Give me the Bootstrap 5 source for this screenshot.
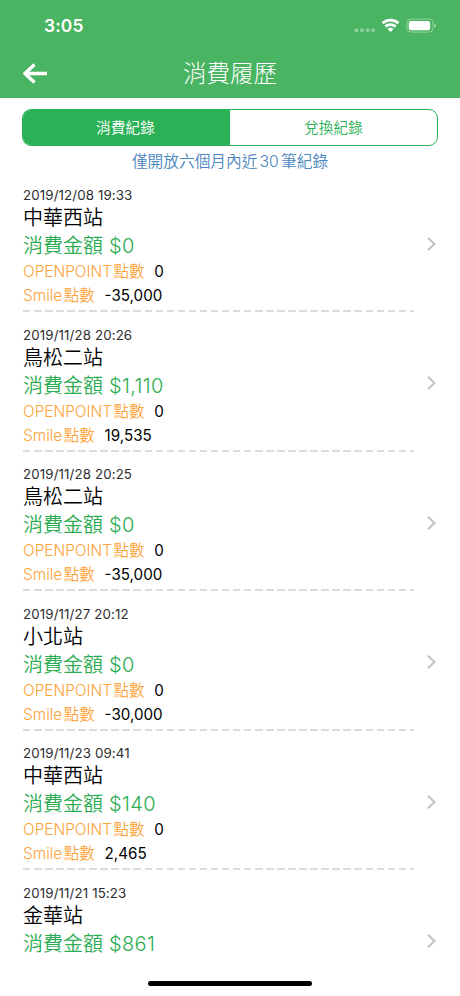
<!DOCTYPE html>
<html lang="zh-Hant">
<head>
<meta charset="utf-8">
<meta name="viewport" content="width=device-width, initial-scale=1">
<title>消費履歷</title>
<link href="https://cdn.jsdelivr.net/npm/bootstrap@5.3.0/dist/css/bootstrap.min.css" rel="stylesheet">
<style>
body{font-family:Inter,"Noto Sans CJK TC",sans-serif;font-weight:400;color:#000;height:996px;overflow:hidden}
.topbar{height:98px;background:#49b461;flex:none}
.status{height:50px;padding:2px 24px 0 44px}
.clock{font-size:17.4px;font-weight:600;letter-spacing:.1px}
.titlebar{height:48px;padding:0 23px}
.page-title{font-size:23.5px;font-weight:300;line-height:48px}
.side{width:40px}
.seg{height:37px;margin:11px 22px 0;border:1px solid #2bb256;border-radius:9px;overflow:hidden;flex:none}
.seg .btn{font-size:14.7px;color:#2bb256;border:0;border-radius:0;padding:2px 0 0;font-weight:350}
.seg .btn.active{background:#2bb256;color:#fff;padding-right:2px}
.notice{font-size:15.7px;line-height:24px;height:24px;margin-top:4px;color:#4a86bd;font-weight:350;flex:none;word-spacing:-2.2px}
.records{margin-top:12px;padding-left:23px}
.record{height:139.6px;flex:none}
.info{width:391px;flex:none}
.when{font-size:13.3px;line-height:18px;height:18px;color:#2d2d2d;letter-spacing:.12px}
.station{font-size:20px;line-height:28px;height:27px;font-weight:350}
.amount{font-size:20px;line-height:30px;height:30px;color:#2bab52;font-weight:350}
.amount span{letter-spacing:.35px;margin-left:.4px}
.points{font-size:15.2px;line-height:22px;height:23px}
.points + .points{height:24px;line-height:24px}
.points .tag{color:#fba338;font-weight:350;margin-right:10px;font-size:15.4px;word-spacing:-2.8px}
.rule{height:2px;margin-top:2px;background:repeating-linear-gradient(90deg,#dcdcdc 0 7.5px,transparent 7.5px 11.05px)}
.go{margin:50.500px 0 0 13px}
.home{width:164px;height:5px;left:148px;top:981px;background:#000}
</style>
</head>
<body class="bg-white d-flex flex-column position-relative">
<header class="topbar text-white">
  <div class="status d-flex align-items-center justify-content-between">
    <span class="clock">3:05</span>
    <svg width="82" height="16" viewBox="0 0 82 16" fill="#fff">
      <g opacity=".38"><circle cx="2.4" cy="12.3" r="2"/><circle cx="8" cy="12.3" r="2"/><circle cx="13.6" cy="12.3" r="2"/><circle cx="19.2" cy="12.3" r="2"/></g>
      <g transform="translate(-.5 -1)"><g fill="none" stroke="#fff" stroke-width="2.8"><path d="M29 6.100a12 12 0 0 1 16 0"/><path d="M31.800 9.600a7.600 7.600 0 0 1 10.400 0"/></g>
      <path d="M34 12a4.500 4.500 0 0 1 6 0L37 15Z"/></g>
      <rect x="53" y="1.100" width="26" height="13" rx="4" fill="none" stroke="#fff" stroke-opacity=".4"/>
      <rect x="54.800" y="2.900" width="21.400" height="9.400" rx="2.200"/>
      <path d="M80.300 5.600v4.200c2.200-.8 2.200-3.400 0-4.200Z" opacity=".5"/>
    </svg>
  </div>
  <div class="titlebar d-flex align-items-center justify-content-between">
    <div class="side d-flex"><svg width="25" height="22" viewBox="0 0 25 22" fill="none" stroke="#fff" stroke-width="3.4"><path d="M24 10.500H2M11.500 1.500 2 10.500l9.500 9"/></svg></div>
    <h1 class="page-title m-0">消費履歷</h1>
    <div class="side"></div>
  </div>
</header>
<div class="seg d-flex">
  <button class="btn active flex-fill w-50">消費紀錄</button>
  <button class="btn flex-fill w-50">兌換紀錄</button>
</div>
<div class="notice text-center">僅開放六個月內近 30 筆紀錄</div>
<main class="records d-flex flex-column">
  <div class="record d-flex"><div class="info"><div class="when">2019/12/08 19:33</div><div class="station">中華西站</div><div class="amount">消費金額 <span>$0</span></div><div class="points"><span class="tag">OPENPOINT 點數</span>0</div><div class="points"><span class="tag">Smile 點數</span>-35,000</div><div class="rule"></div></div><svg class="go" width="10" height="14" viewBox="0 0 10 14" fill="none" stroke="#c2c2c5" stroke-width="2"><path d="M1 .7 7.500 7 1 13.300"/></svg></div>
  <div class="record d-flex"><div class="info"><div class="when">2019/11/28 20:26</div><div class="station">鳥松二站</div><div class="amount">消費金額 <span>$1,110</span></div><div class="points"><span class="tag">OPENPOINT 點數</span>0</div><div class="points"><span class="tag">Smile 點數</span>19,535</div><div class="rule"></div></div><svg class="go" width="10" height="14" viewBox="0 0 10 14" fill="none" stroke="#c2c2c5" stroke-width="2"><path d="M1 .7 7.500 7 1 13.300"/></svg></div>
  <div class="record d-flex"><div class="info"><div class="when">2019/11/28 20:25</div><div class="station">鳥松二站</div><div class="amount">消費金額 <span>$0</span></div><div class="points"><span class="tag">OPENPOINT 點數</span>0</div><div class="points"><span class="tag">Smile 點數</span>-35,000</div><div class="rule"></div></div><svg class="go" width="10" height="14" viewBox="0 0 10 14" fill="none" stroke="#c2c2c5" stroke-width="2"><path d="M1 .7 7.500 7 1 13.300"/></svg></div>
  <div class="record d-flex"><div class="info"><div class="when">2019/11/27 20:12</div><div class="station">小北站</div><div class="amount">消費金額 <span>$0</span></div><div class="points"><span class="tag">OPENPOINT 點數</span>0</div><div class="points"><span class="tag">Smile 點數</span>-30,000</div><div class="rule"></div></div><svg class="go" width="10" height="14" viewBox="0 0 10 14" fill="none" stroke="#c2c2c5" stroke-width="2"><path d="M1 .7 7.500 7 1 13.300"/></svg></div>
  <div class="record d-flex"><div class="info"><div class="when">2019/11/23 09:41</div><div class="station">中華西站</div><div class="amount">消費金額 <span>$140</span></div><div class="points"><span class="tag">OPENPOINT 點數</span>0</div><div class="points"><span class="tag">Smile 點數</span>2,465</div><div class="rule"></div></div><svg class="go" width="10" height="14" viewBox="0 0 10 14" fill="none" stroke="#c2c2c5" stroke-width="2"><path d="M1 .7 7.500 7 1 13.300"/></svg></div>
  <div class="record d-flex"><div class="info"><div class="when">2019/11/21 15:23</div><div class="station">金華站</div><div class="amount">消費金額 <span>$861</span></div></div><svg class="go" width="10" height="14" viewBox="0 0 10 14" fill="none" stroke="#c2c2c5" stroke-width="2"><path d="M1 .7 7.500 7 1 13.300"/></svg></div>
</main>
<div class="home position-absolute rounded-pill"></div>
<script src="https://cdn.jsdelivr.net/npm/bootstrap@5.3.0/dist/js/bootstrap.bundle.min.js"></script>
</body>
</html>
